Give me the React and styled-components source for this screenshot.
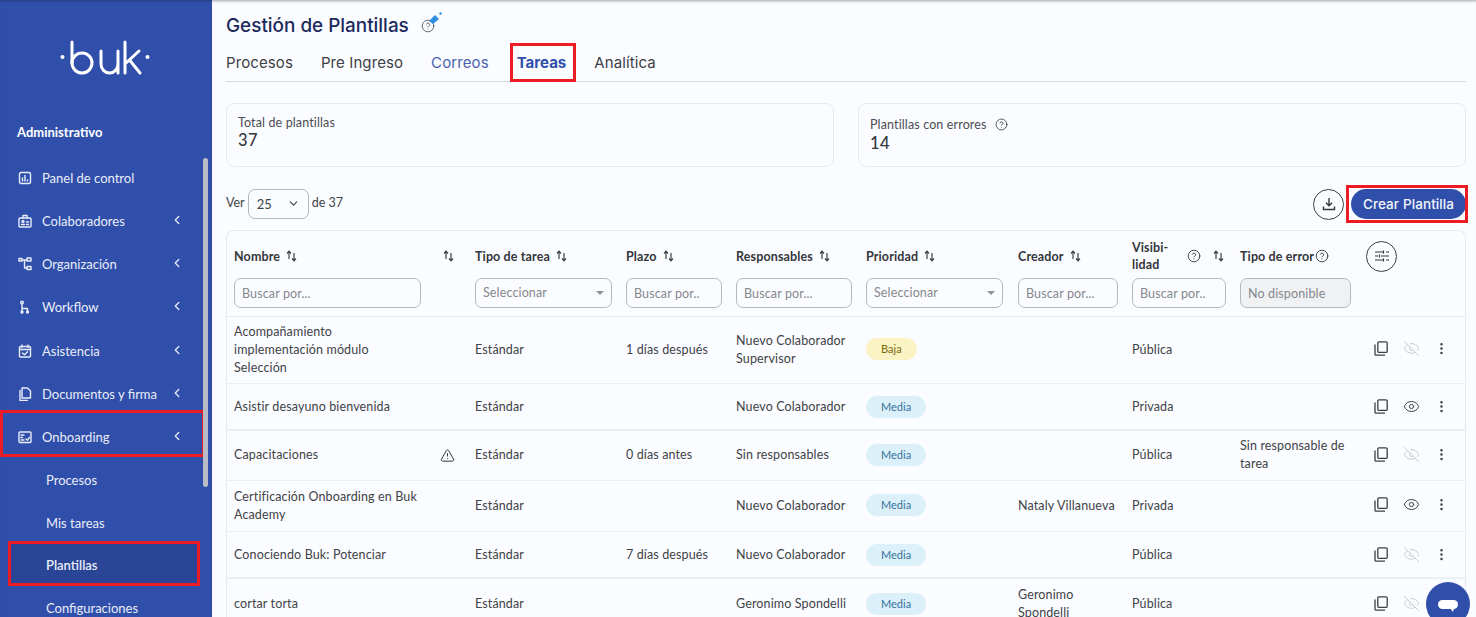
import React from 'react';
import styled, { createGlobalStyle } from 'styled-components';
import { CircleHelp, TriangleAlert, ChevronLeft, ChevronDown, EyeOff, Eye, EllipsisVertical } from 'lucide-react';

const Global = createGlobalStyle`
  html, body { margin: 0; padding: 0; height: 100%; overflow: hidden; background: #fbfcff; }
  #root { height: 100%; }
  *, *::before, *::after { box-sizing: border-box; }
`;
const TEXT = '"Lato", "Open Sans", sans-serif';
const HEAD = '"Inter", "Roboto", sans-serif';
const BLUE = '#304fab';
const RED = '#ed1c24';

const Page = styled.div`
  display: flex; width: 1476px; height: 617px; overflow: hidden; position: relative;
  font-family: ${TEXT}; color: #404347;
`;
const Side = styled.aside`
  width: 212px; flex: none; height: 617px; background: ${BLUE}; color: #e9edf8; position: relative;
  box-shadow: inset 0 3px 3px -2px rgba(30,30,60,.45); overflow: hidden; padding-top: 40px;
`;
const LogoBox = styled.div`display: flex; padding-left: 60px; height: 40px;`;
const SideTitle = styled.div`
  margin: 45px 0 0 17px; height: 14px; line-height: 14px; font-size: 13px; font-weight: 700; color: #fff;
`;
const Nav = styled.nav`display: flex; flex-direction: column; margin-top: 17px;`;
const NavItem = styled.div`
  height: 43px; display: flex; align-items: center; position: relative; padding-left: 18px; font-size: 13px;
  color: #e9edf8; margin-top: ${p => p.$push ? 1 : 0}px;
  ${p => p.$marked && `&::after{content:'';position:absolute;left:0;top:-5px;width:205px;height:47px;border:3px solid ${RED};}`}
`;
const NavIcon = styled.span`width: 24px; flex: none; display: flex;`;
const NavChevron = styled.span`position: absolute; left: 170px; top: 14px; display: flex;`;
const SubItem = styled.div`
  height: 43px; display: flex; align-items: center; padding-left: 46px; font-size: 13px;
  position: relative; color: #e9edf8;
  ${p => p.$marked && `
    font-weight: 600; margin-top: -1px;
    &::before{content:'';position:absolute;left:10px;top:0;width:187px;height:41px;background:#2b4596;border-radius:3px;z-index:0;}
    &::after{content:'';position:absolute;left:8px;top:-2px;width:192px;height:45px;border:3px solid ${RED};}
  `}
  & > span { position: relative; z-index: 1; }
`;
const Scroll = styled.div`position: absolute; left: 203px; top: 158px; width: 5px; height: 329px; background: #b9bcc6; border-radius: 3px;`;

const Main = styled.main`
  flex: 1; height: 617px; padding: 15px 10px 0 14px; box-shadow: inset 0 3px 3px -2px rgba(30,30,60,.4); overflow: hidden;
  min-width: 0;
`;
const TitleRow = styled.div`display: flex; align-items: center; height: 22px; gap: 12px;`;
const Title = styled.h1`margin: 0; font: 500 18.9px/22px ${HEAD}; color: #1c2a5c;`;
const TitleIcon = styled.span`position: relative; width: 22px; height: 22px; display: flex; top: -3px;`;
const Tabs = styled.div`
  display: flex; gap: 28px; height: 45px; border-bottom: 1px solid #d9dbe0; align-items: center; padding-top: 8px;
`;
const Tab = styled.div`
  position: relative; font: ${p => p.$active ? 700 : 400} 15px/20px ${HEAD}; color: ${p => p.$color || '#3d4045'};
  letter-spacing: ${p => p.$active ? 0 : '.1px'};
  ${p => p.$marked && `&::after{content:'';position:absolute;left:-7px;top:-10px;width:66px;height:39px;border:3px solid ${RED};}`}
`;
const Stats = styled.div`display: grid; grid-template-columns: 608px 608px; gap: 24px; margin-top: 21px;`;
const Stat = styled.div`
  height: 64px; background: #fbfcff; border: 1px solid #e8eaee; border-radius: 8px; padding: ${p => p.$pad}px 11px 0;
`;
const StatLabel = styled.div`font-size: 12.5px; line-height: 15px; letter-spacing: .13px; color: #4a4d52; display: flex; align-items: center; gap: 8px;`;
const StatValue = styled.div`font-size: 16.5px; line-height: 20px; color: #33363a; font-weight: 500; letter-spacing:.5px; margin-top: ${p => p.$gap || 0}px;`;
const Bar = styled.div`display: flex; align-items: center; height: 32px; margin-top: 21px; font-size: 12.5px; position: relative;`;
const BarText = styled.span`padding-bottom: 4px;`;
const PageSelect = styled.div`
  width: 61px; height: 30px; margin: 0 3px 0 3px; border: 1px solid #b5b8bd; border-radius: 7px; display: flex; align-items: center;
  justify-content: space-between; padding: 0 8px 1px; font-size: 13px; color:#404347;
`;
const BarSpacer = styled.div`flex: 1;`;
const RoundBtn = styled.div`
  width: 31px; height: 31px; border: 1px solid #3c3f44; border-radius: 50%; display: flex; align-items: center; justify-content: center; flex: none; background: #fbfcff;
  margin-left: ${p => p.$shift || 0}px;
`;
const CreateBtn = styled.div`
  width: 115px; height: 30px; margin-left: 7px; background: ${BLUE}; color: #f3f5fb; border-radius: 15px; display: flex; align-items: center; justify-content: center;
  font: 500 13.5px ${HEAD}; letter-spacing: .1px; position: relative; flex: none;
  &::after{content:'';position:absolute;left:-5px;top:-4px;width:122px;height:38px;border:3px solid ${RED};}
`;
const Card = styled.div`
  margin-top: 10px; border: 1px solid #e8eaee; border-bottom: 0; border-radius: 8px 8px 0 0; width: 1240px;
`;
const Table = styled.table`border-collapse: collapse; table-layout: fixed; width: 1239px; margin-left: -1px; font-size: 12.5px; letter-spacing: .13px;`;
const Col = styled.col`width: ${p => p.$w}px;`;
const Th = styled.th`padding: 0 8px; text-align: left; vertical-align: top; font-weight: 700; color: #33363b; border-bottom: 1px solid #e6e8ec; height: 85px;`;
const ThHead = styled.div`
  display: flex; align-items: center; height: 47px; padding-top: 3px; line-height: 17px; gap: ${p => p.$gap ?? 6}px;
  justify-content: ${p => p.$between ? 'space-between' : 'flex-start'}; white-space: ${p => p.$nowrap ? 'nowrap' : 'normal'};
  padding-left: ${p => p.$indent || 0}px;
`;
const VisLabel = styled.span`display: block;`;
const Input = styled.div`
  height: 30px; border: 1px solid #b5b8bd; border-radius: 7px; padding: 0 7px ${p => p.$select ? 2 : 0}px; display: flex; align-items: center; justify-content: space-between;
  color: #85888d; font-weight: 400; font-size: 12.5px; white-space: nowrap; overflow: hidden;
  background: ${p => p.$off ? '#f0f1f3' : 'transparent'};
  width: ${p => p.$w ? p.$w + 'px' : 'auto'};
`;
const Caret = styled.span`width: 0; height: 0; margin-top: 2px; border-left: 4px solid transparent; border-right: 4px solid transparent; border-top: 4px solid #8f9296; flex: none;`;
const Tr = styled.tr`height: ${p => p.$h}px;`;
const Td = styled.td`
  padding: ${p => p.$nudge ? 2 : 0}px 8px 0; border-bottom: ${p => p.$thick ? 2 : 1}px solid #eceef1; line-height: 18px; color: #404347; vertical-align: middle;
`;
const Badge = styled.span`
  display: inline-flex; align-items: center; justify-content: center; height: 22px; padding: 0 15px; border-radius: 11px; font-size: 11px; letter-spacing: 0;
  background: ${p => p.$low ? '#faf3c4' : '#dcf0fa'}; color: ${p => p.$low ? '#7c6a12' : '#33739a'}; margin-top: -1px;
`;
const WarnWrap = styled.div`display: flex; padding-left: 3px;`;
const Actions = styled.div`display: flex; align-items: center; gap: 15px; padding-left: 7px; margin-top: -2px;`;
const Chat = styled.div`
  position: absolute; left: 1426px; top: 582px; width: 44px; height: 44px; border-radius: 50%; background: ${BLUE}; display: flex; justify-content: center; padding-top: 18px;
`;
const HelpGap = styled.span`display: flex; margin-left: 6px;`;

const S = { fill: 'none', stroke: 'currentColor', strokeWidth: 1.4, strokeLinecap: 'round', strokeLinejoin: 'round' };
const Ic = ({ children, size = 14, ...r }) => <svg width={size} height={size} viewBox="0 0 14 14" {...S} {...r}>{children}</svg>;

const Logo = () => (
  <svg width="90" height="36" viewBox="0 0 90 36" fill="none" stroke="#fff" strokeWidth="3" strokeLinecap="round">
    <circle cx="2.5" cy="17" r="2" fill="#fff" stroke="none" />
    <path d="M12 2 V23" />
    <circle cx="22" cy="23" r="10" />
    <path d="M41 11 V24 a8.5 9 0 0 0 17 0 V11 M58 24 V33" />
    <path d="M65 2 V33 M65 24 L79 11 M69.5 20 L80 33" />
    <circle cx="87.5" cy="17" r="2" fill="#fff" stroke="none" />
  </svg>
);

const icons = {
  panel: <Ic><rect x="1.5" y="1.5" width="11" height="11" rx="1.5" /><path d="M4.5 10V7M7 10V4.5M9.5 10V9" /></Ic>,
  colab: <Ic><rect x="1" y="4" width="12" height="9" rx="1" /><path d="M5 4V1.5h4V4M3.5 10.5h3M8.5 8h2M8.5 10.5h2" /><circle cx="5" cy="7.5" r="1" /></Ic>,
  org: <Ic><rect x="1" y="1.5" width="3" height="2.5" /><rect x="9" y="1" width="4" height="3" /><rect x="9" y="9.5" width="4" height="3" /><path d="M4 3h5M6.5 3v8H9" /></Ic>,
  flow: <Ic><circle cx="4" cy="2.5" r="1.3" /><path d="M4 4v4.5h5.5v2M4 8.5V11" /><circle cx="4" cy="12" r="1" fill="currentColor" /><circle cx="9.5" cy="12" r="1" fill="currentColor" /></Ic>,
  time: <Ic><rect x="1.5" y="2.5" width="11" height="10.5" rx="1" /><path d="M4 1v2.5M10 1v2.5M1.5 5.5h11M4.5 9l2 1.7 3-3" /></Ic>,
  docs: <Ic><path d="M4 1h5.5L12.5 4v7H4zM2 3.5V13.5h7.5" /></Ic>,
  onb: <Ic><rect x="1" y="2" width="12" height="10.5" rx="1" /><path d="M3 5h3M3 7.5h1.5M3 10h3M8 9l1.5 1.2 2-2.8" /></Ic>,
};
const Items = [['panel', 'Panel de control'], ['colab', 'Colaboradores', 1], ['org', 'Organización', 1], ['flow', 'Workflow', 1], ['time', 'Asistencia', 1, 0, 1], ['docs', 'Documentos y firma', 1], ['onb', 'Onboarding', 1, 1]];

const Sort = () => (
  <svg width="11" height="12" viewBox="0 0 11 12" fill="none" stroke="#3c3f44" strokeWidth="1.2" style={{ flex: 'none' }}>
    <path d="M3 9V1.5M1 3.5 3 1.2 5 3.5" />
    <path d="M8 3v8M6 8.5 8 10.8 10 8.5" />
  </svg>
);
const Help = ({ size = 14 }) => <CircleHelp size={size} strokeWidth={1.6} color="#3c3f44" style={{ flex: 'none' }} />;
const CopyIc = () => (
  <svg width="14" height="15" viewBox="0 0 14 15" fill="none" stroke="#3c3f44" strokeWidth="1.3" style={{ flex: 'none' }}>
    <rect x="3.8" y="0.8" width="9.4" height="10.6" rx="1.2" />
    <path d="M1 3.5V13.2a1 1 0 0 0 1 1H11" />
  </svg>
);

const cols = [203, 38, 151, 110, 130, 152, 114, 108, 127, 106];
const rows = [
  { h: 67, n: <>Acompañamiento<br />implementación módulo<br />Selección</>, p: '1 días después', r: <>Nuevo Colaborador<br />Supervisor</>, low: 1, v: 'Pública' },
  { h: 47, n: 'Asistir desayuno bienvenida', r: 'Nuevo Colaborador', v: 'Privada', on: 1, thick: 1, nudge: 1 },
  { h: 50, n: 'Capacitaciones', warn: 1, p: '0 días antes', r: 'Sin responsables', v: 'Pública', err: <>Sin responsable de<br />tarea</> },
  { h: 51, n: <>Certificación Onboarding en Buk<br />Academy</>, r: 'Nuevo Colaborador', c: 'Nataly Villanueva', v: 'Privada', on: 1 },
  { h: 47, n: 'Conociendo Buk: Potenciar', p: '7 días después', r: 'Nuevo Colaborador', v: 'Pública', thick: 1, nudge: 1 },
  { h: 50, n: 'cortar torta', r: 'Geronimo Spondelli', c: <>Geronimo<br />Spondelli</>, v: 'Pública', nudge: 1 },
];
const Header = ({ children }) => <ThHead>{children}<Sort /></ThHead>;

export default function App() {
  return (
    <Page>
      <Global />
      <Side>
        <LogoBox><Logo /></LogoBox>
        <SideTitle>Administrativo</SideTitle>
        <Nav>
          {Items.map(([k, t, ch, m, push]) => (
            <NavItem key={t} $marked={m} $push={push}>
              <NavIcon>{icons[k]}</NavIcon>{t}
              {ch && <NavChevron><ChevronLeft size={14} strokeWidth={2.2} /></NavChevron>}
            </NavItem>
          ))}
          <SubItem><span>Procesos</span></SubItem>
          <SubItem><span>Mis tareas</span></SubItem>
          <SubItem $marked><span>Plantillas</span></SubItem>
          <SubItem><span>Configuraciones</span></SubItem>
        </Nav>
        <Scroll />
      </Side>
      <Main>
        <TitleRow>
          <Title>Gestión de Plantillas</Title>
          <TitleIcon>
            <CircleHelp size={14} strokeWidth={1.5} color="#55585d" style={{ marginTop: 7 }} />
            <svg width="14" height="14" viewBox="0 0 14 14" style={{ position: 'absolute', left: 7, top: 0 }}>
              <path d="M1 9 7 3l4 4-6 5z" fill="#2f8fe0" />
              <circle cx="12.5" cy="1.5" r="1.2" fill="#2f8fe0" />
            </svg>
          </TitleIcon>
        </TitleRow>
        <Tabs>
          <Tab>Procesos</Tab>
          <Tab>Pre Ingreso</Tab>
          <Tab $color="#4a62b0">Correos</Tab>
          <Tab $active $marked $color={BLUE}>Tareas</Tab>
          <Tab>Analítica</Tab>
        </Tabs>
        <Stats>
          <Stat $pad={11}><StatLabel>Total de plantillas</StatLabel><StatValue>37</StatValue></Stat>
          <Stat $pad={13}><StatLabel>Plantillas con errores <Help size={13} /></StatLabel><StatValue $gap={1}>14</StatValue></Stat>
        </Stats>
        <Bar>
          <BarText>Ver</BarText>
          <PageSelect>25 <ChevronDown size={13} strokeWidth={2} /></PageSelect>
          <BarText>de 37</BarText>
          <BarSpacer />
          <RoundBtn>
            <svg width="14" height="14" viewBox="0 0 14 14" fill="none" stroke="#33363a" strokeWidth="1.4"><path d="M7 1v7.5M4 5.8 7 8.8l3-3M1.5 9.5V12.5h11V9.5" /></svg>
          </RoundBtn>
          <CreateBtn>Crear Plantilla</CreateBtn>
        </Bar>
        <Card>
          <Table>
            <colgroup>{cols.map((w, i) => <Col key={i} $w={w} />)}</colgroup>
            <thead>
              <tr>
                <Th><Header>Nombre</Header><Input>Buscar por...</Input></Th>
                <Th><ThHead $indent={6}><Sort /></ThHead></Th>
                <Th><Header>Tipo de tarea</Header><Input $w={137} $select>Seleccionar <Caret /></Input></Th>
                <Th><Header>Plazo</Header><Input $w={96}>Buscar por..</Input></Th>
                <Th><Header>Responsables</Header><Input $w={116}>Buscar por...</Input></Th>
                <Th><Header>Prioridad</Header><Input $w={137} $select>Seleccionar <Caret /></Input></Th>
                <Th><Header>Creador</Header><Input $w={100}>Buscar por...</Input></Th>
                <Th>
                  <ThHead $between><VisLabel>Visibi-<br />lidad</VisLabel><HelpGap><Help /></HelpGap><Sort /></ThHead>
                  <Input $w={94}>Buscar por..</Input>
                </Th>
                <Th><ThHead $gap={1} $nowrap>Tipo de error<Help /></ThHead><Input $w={111} $off>No disponible</Input></Th>
                <Th><ThHead><RoundBtn $shift={-1}>
                  <svg width="16" height="14" viewBox="0 0 16 14" fill="none" stroke="#33363a" strokeWidth="1.2"><path d="M1 3h8M12 3h3M1 7h3M7 7h8M1 11h8M12 11h3M9.5 1.5v3M5.5 5.5v3M9.5 9.5v3" /></svg>
                </RoundBtn></ThHead></Th>
              </tr>
            </thead>
            <tbody>
              {rows.map((r, i) => (
                <Tr key={i} $h={r.h}>
                  <Td $thick={r.thick} $nudge={r.nudge}>{r.n}</Td>
                  <Td $thick={r.thick} $nudge={r.nudge}>{r.warn && <WarnWrap><TriangleAlert size={15} strokeWidth={1.6} color="#33363a" /></WarnWrap>}</Td>
                  <Td $thick={r.thick} $nudge={r.nudge}>Estándar</Td>
                  <Td $thick={r.thick} $nudge={r.nudge}>{r.p}</Td>
                  <Td $thick={r.thick} $nudge={r.nudge}>{r.r}</Td>
                  <Td $thick={r.thick} $nudge={r.nudge}><Badge $low={r.low}>{r.low ? 'Baja' : 'Media'}</Badge></Td>
                  <Td $thick={r.thick} $nudge={r.nudge}>{r.c}</Td>
                  <Td $thick={r.thick} $nudge={r.nudge}>{r.v}</Td>
                  <Td $thick={r.thick} $nudge={r.nudge}>{r.err}</Td>
                  <Td $thick={r.thick} $nudge={r.nudge}>
                    <Actions>
                      <CopyIc />
                      {r.on ? <Eye size={17} strokeWidth={1.4} color="#3c3f44" /> : <EyeOff size={17} strokeWidth={1.4} color="#c9cbcf" />}
                      <EllipsisVertical size={15} strokeWidth={2} color="#3c3f44" style={{ marginLeft: -1 }} />
                    </Actions>
                  </Td>
                </Tr>
              ))}
            </tbody>
          </Table>
        </Card>
      </Main>
      <Chat>
        <svg width="20" height="13" viewBox="0 0 20 13"><rect width="20" height="9" rx="4.5" fill="#fff" /><path d="M12 8h4l-1 4z" fill="#fff" /></svg>
      </Chat>
    </Page>
  );
}
